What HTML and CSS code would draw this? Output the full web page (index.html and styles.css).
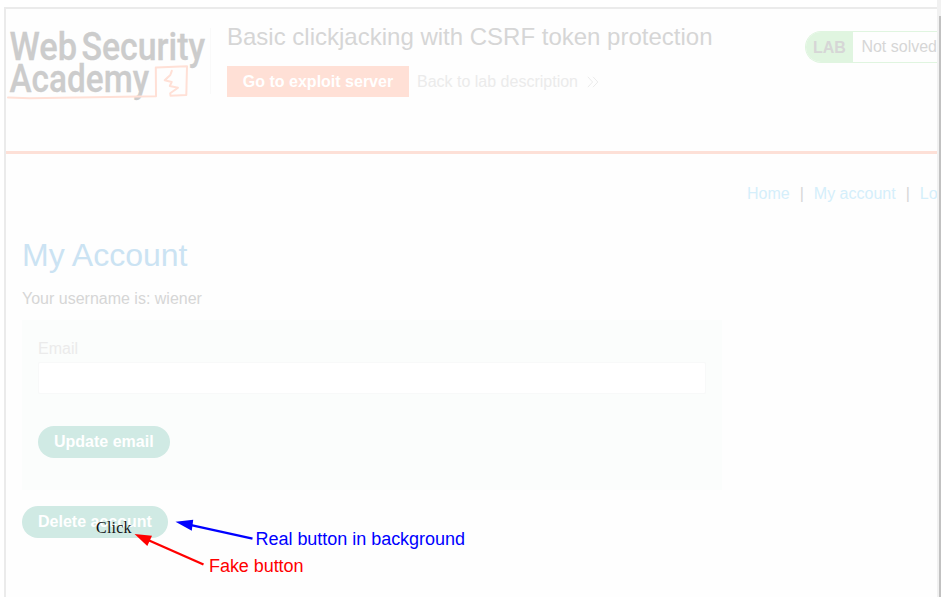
FILE: index.html
```html
<!DOCTYPE html>
<html lang="en">
<head>
<meta charset="utf-8">
<title>My Account</title>
<link rel="stylesheet" href="styles.css">
</head>
<body>
<div class="window">
  <div class="frame">
    <header class="header">
      <svg class="logo" width="204" height="84" viewBox="6 24 204 84" role="img" aria-label="Web Security Academy">
        <g class="logo-text">
          <text x="9.5" y="59.5" textLength="67.5" lengthAdjust="spacingAndGlyphs">Web</text>
          <text x="81.5" y="59.5" textLength="123.5" lengthAdjust="spacingAndGlyphs">Security</text>
          <text x="9.5" y="92" textLength="139.5" lengthAdjust="spacingAndGlyphs">Academy</text>
        </g>
        <path class="logo-line" d="M8 97.6 L30 98.2 L156 96.2 L155.8 67.6 L187 66.3 L186.3 95.1 L170.5 95.7 L170.2 93.3 L178 87.8 L169.8 86 L171.7 82 L164.7 80.2 L170.3 75 L171.8 70.8"/>
      </svg>
      <div class="title-block">
        <h2 class="title">Basic clickjacking with CSRF token protection</h2>
        <div class="actions">
          <a class="exploit">Go to exploit server</a>
          <a class="back">Back to lab description
            <svg class="chevrons" width="12" height="12" viewBox="0 0 12 12"><path d="M.8 .8 L5.6 6 L.8 11.2 M6 .8 L10.8 6 L6 11.2"/></svg>
          </a>
        </div>
      </div>
      <div class="status"><span class="lab">LAB</span><span class="state">Not solved</span></div>
    </header>
    <nav class="nav"><a>Home</a><span>|</span><a>My account</a><span>|</span><a>Log out</a></nav>
    <main class="main">
      <h1 class="heading">My Account</h1>
      <p class="username">Your username is: wiener</p>
      <form class="form">
        <label class="label" for="email">Email</label>
        <input class="input" id="email" type="text">
        <button class="button" type="button">Update email</button>
      </form>
      <button class="button" type="button">Delete account</button>
    </main>
  </div>
  <div class="scrollbar"><div class="thumb"></div></div>
</div>
<svg class="notes" width="941" height="597" viewBox="0 0 941 597">
  <text class="click" x="96" y="533" textLength="35.5">Click</text>
  <g class="real">
    <path class="shaft" d="M190 524.8 L252.5 538.6"/>
    <path class="head" d="M175.5 521.8 L193.2 519.8 L191.8 530.8 Z"/>
    <text x="255.5" y="545" textLength="209.5">Real button in background</text>
  </g>
  <g class="fake">
    <path class="shaft" d="M148 540 L203.5 564.5"/>
    <path class="head" d="M134.5 534 L152 535.8 L147.3 546 Z"/>
    <text x="209" y="572" textLength="94.5">Fake button</text>
  </g>
</svg>
</body>
</html>
```
FILE: styles.css
```css
* { box-sizing: border-box; }
body {
  margin: 0;
  background: #fff;
  color: #d6d6d6;
  font: 16px/20px "Liberation Sans", Arial, sans-serif;
  overflow: hidden;
}
.window { display: flex; height: 597px; padding-left: 4px; }
.frame {
  flex: 1;
  min-width: 0;
  margin-top: 7px;
  border-top: 2px solid #ebebeb;
  border-left: 2px solid #ebebeb;
  background: #fefefe;
  overflow: hidden;
}
.scrollbar { width: 4px; padding: 16px 0 0 2px; background: #f1f1f1; }
.thumb { height: 100%; background: #c1c1c1; }
.header {
  display: flex;
  align-items: flex-start;
  height: 145px;
  padding-top: 15px;
  border-bottom: 3px solid #fde0d7;
}
.logo { flex: none; }
.logo-text { fill: #ccc; stroke: #ccc; stroke-width: .3; font: 500 38px Roboto, sans-serif; }
.logo-line { fill: none; stroke: #ffe0d6; stroke-width: 2; stroke-linejoin: round; stroke-linecap: round; }
.title-block { flex: 1; height: 66px; margin-top: 4px; padding-left: 16px; border-left: 1px solid #f9f9f9; }
.title { margin: -5px 0 0; font-size: 24px; line-height: 28px; font-weight: 400; white-space: nowrap; }
.actions { display: flex; align-items: center; gap: 8px; margin-top: 15px; }
.exploit { width: 182px; height: 31px; background: #ffe0d6; color: #fff; font-weight: 700; line-height: 31px; text-align: center; }
.back { display: flex; align-items: center; gap: 9px; color: #ebebeb; white-space: nowrap; }
.chevrons { fill: none; stroke: #ebebeb; stroke-width: 1; }
.status {
  display: flex;
  flex: none;
  width: 132px;
  height: 32px;
  margin-top: 7px;
  border: 1px solid #e0f5e0;
  border-right: 0;
  border-radius: 16px 0 0 16px;
  line-height: 30px;
  white-space: nowrap;
  overflow: hidden;
}
.lab { width: 48px; padding-left: 7px; background: #e0f5e0; font-weight: 700; line-height: 31px; }
.state { padding-left: 8px; }
.nav { display: flex; gap: 10px; width: 200px; margin: 30px 0 0 741px; white-space: nowrap; }
.nav a { color: #d5effb; }
.main { padding: 0 16px; }
.heading { margin: 32px 0 0; color: #cbe3f3; font-size: 32px; line-height: 38px; font-weight: 400; }
.username { margin: 15px 0 11px; }
.form { width: 700px; height: 170px; margin-bottom: 16px; padding: 19px 16px; background: #fbfdfc; }
.label { display: block; color: #ebebeb; }
.input { display: block; width: 668px; height: 32px; margin: 3px 0 32px; border: 1px solid #f8f9f9; border-radius: 2px; background: #fff; outline: 0; }
.button { display: block; height: 32px; padding: 0 16px; border: 0; border-radius: 16px; background: #d0eae4; color: #fff; font: 700 16px/30px "Liberation Sans", Arial, sans-serif; }
.notes { position: absolute; inset: 0; pointer-events: none; }
.notes text { font: 18px "Liberation Sans", Arial, sans-serif; }
.notes .click { fill: #111; font: 16px "Liberation Serif", "Times New Roman", serif; }
.shaft { stroke-width: 2.4; }
.real { fill: #00f; }
.real .shaft { stroke: #00f; }
.fake { fill: #f00; }
.fake .shaft { stroke: #f00; }
```
